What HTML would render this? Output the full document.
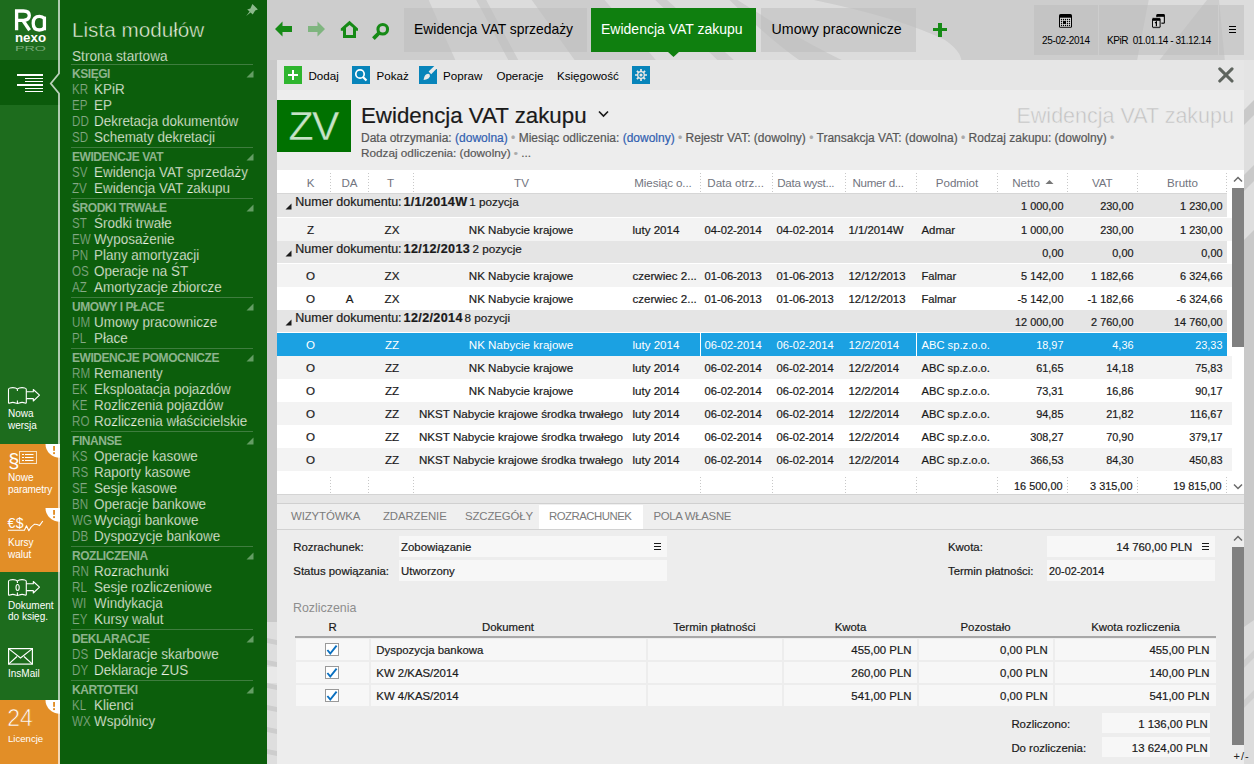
<!DOCTYPE html><html><head><meta charset="utf-8"><style>
html,body{margin:0;padding:0;width:1254px;height:764px;overflow:hidden;background:#cbcbcb}
body{position:relative;font-family:"Liberation Sans",sans-serif}
body>div,body>span,body>svg{position:absolute;display:block}
body>span{white-space:nowrap}
.d{-webkit-text-stroke:0.2px currentColor}
</style></head><body>
<div style="left:0px;top:0px;width:60px;height:764px;background:#1d6c1d;"></div>
<div style="left:0px;top:60px;width:60px;height:45px;background:#0b5a0b;"></div>
<div style="left:0px;top:444px;width:60px;height:128px;background:#e28e27;"></div>
<div style="left:0px;top:700px;width:60px;height:64px;background:#e28e27;"></div>
<svg style="left:0;top:0" width="58" height="58">
<g fill="none" stroke="#fff" stroke-width="3.3">
<path d="M16.6 30.3 V11 H23.5 Q29.3 11 29.3 15.6 Q29.3 20.3 23.5 20.3 H16.6"/>
<path d="M22.8 20.3 L29.6 30.3"/>
<path d="M44.4 16.6 V30.3"/>
<path d="M44.4 18.5 Q42.5 16.3 39.5 16.3 Q33.2 16.3 33.2 23.3 Q33.2 30 39.2 30 Q42.5 30 44.4 27.8"/>
</g>
<text x="15" y="41.6" font-family="Liberation Sans" font-weight="700" font-size="13" fill="#fff" textLength="31" lengthAdjust="spacingAndGlyphs">nexo</text>
<text x="15" y="51" font-family="Liberation Sans" font-size="7" fill="#7aab7a" textLength="31" lengthAdjust="spacingAndGlyphs">PRO</text>
</svg>
<div style="left:17px;top:74px;width:26px;height:2px;background:#ffffff;"></div>
<div style="left:25px;top:78px;width:18px;height:1px;background:#ffffff;"></div>
<div style="left:25px;top:81px;width:18px;height:1px;background:#ffffff;"></div>
<div style="left:17px;top:84px;width:26px;height:2px;background:#ffffff;"></div>
<div style="left:25px;top:88px;width:18px;height:1px;background:#ffffff;"></div>
<div style="left:25px;top:91px;width:18px;height:1px;background:#ffffff;"></div>
<div style="left:60px;top:0px;width:207px;height:764px;background:#0c5e0c;"></div>
<svg style="left:0;top:0" width="62" height="764"><path d="M60 73.5 L50.5 83.5 L60 93.5Z" fill="#0c5e0c"/><path d="M59 0 V73.5 L50.8 83.5 L59 93.5 V764" stroke="rgba(255,255,255,0.72)" stroke-width="1.8" fill="none"/></svg>
<svg style="left:0;top:380px" width="58" height="64" fill="none" stroke="#fff" stroke-width="1.1" stroke-linejoin="round">
<path d="M8.5 22.8 V9.6 Q8.5 8.2 10 8 Q12.8 7.2 15.5 8 Q17 8.5 17.4 9.3 Q17.8 8.5 19.3 8 Q22 7.2 24.8 8 Q26.3 8.2 26.3 9.6 V22.8 Q26.3 23.4 25 22.9 Q22 21.9 19.3 22.9 Q17.8 23.5 17.4 23.3 Q17 23.5 15.5 22.9 Q12.8 21.9 10 22.9 Q8.5 23.4 8.5 22.8 Z"/>
<path d="M17.4 9.3 V11 M17.4 20.5 V23.3"/>
<path d="M26.3 11.8 H33.3 V9.5 L39.5 15.2 L33.3 21 V18.6 H26.3"/>
</svg>
<span style="left:8px;top:408px;font-size:10px;line-height:12.5px;color:#ffffff;">Nowa</span>
<span style="left:8px;top:420px;font-size:10px;line-height:12.5px;color:#ffffff;">wersja</span>
<svg style="left:45px;top:444px" width="15" height="15"><path d="M0.5 0 A14.5 13.8 0 0 0 15 13.8 V0 Z" fill="#fff"/><rect x="8.1" y="2" width="1.9" height="4.8" fill="#e28e27"/><rect x="8.1" y="8.2" width="1.9" height="1.9" fill="#e28e27"/></svg>
<svg style="left:45px;top:508px" width="15" height="15"><path d="M0.5 0 A14.5 13.8 0 0 0 15 13.8 V0 Z" fill="#fff"/><rect x="8.1" y="2" width="1.9" height="4.8" fill="#e28e27"/><rect x="8.1" y="8.2" width="1.9" height="1.9" fill="#e28e27"/></svg>
<svg style="left:45px;top:700px" width="15" height="15"><path d="M0.5 0 A14.5 13.8 0 0 0 15 13.8 V0 Z" fill="#fff"/><rect x="8.1" y="2" width="1.9" height="4.8" fill="#e28e27"/><rect x="8.1" y="8.2" width="1.9" height="1.9" fill="#e28e27"/></svg>
<svg style="left:0;top:444px" width="58" height="64" fill="none" stroke="#f7e2c4" stroke-width="1">
<rect x="19.5" y="7.5" width="17" height="12"/>
<path d="M22 10.5 H24 M25 10.5 H33.5 M22 13.5 H24 M25 13.5 H33.5 M22 16.5 H24 M25 16.5 H33.5" stroke="#fff"/>
</svg>
<span style="left:7.6px;top:448px;font-size:21px;line-height:26.25px;color:#ffffff;transform:scaleX(0.95);">§</span>
<span style="left:8px;top:472px;font-size:10px;line-height:12.5px;color:#ffffff;">Nowe</span>
<span style="left:8px;top:484px;font-size:10px;line-height:12.5px;color:#ffffff;letter-spacing:-0.1px;">parametry</span>
<svg style="left:0;top:508px" width="58" height="64" fill="none" stroke="#fff" stroke-width="1.1" stroke-linejoin="round">
<path d="M8 22.3 H24.4 L26.5 17.8 L28.8 22.8 Q31 18.3 34.2 16.4 Q36 15.9 39.5 17.6 L42.8 13"/>
</svg>
<span style="left:7.6px;top:515px;font-size:14px;line-height:17.5px;color:#ffffff;letter-spacing:0.4px;">€$</span>
<span style="left:8px;top:537px;font-size:10px;line-height:12.5px;color:#ffffff;">Kursy</span>
<span style="left:8px;top:549px;font-size:10px;line-height:12.5px;color:#ffffff;">walut</span>
<svg style="left:0;top:572px" width="58" height="64" fill="none" stroke="#fff" stroke-width="1.1" stroke-linejoin="round">
<path d="M8.5 22.8 V9.6 Q8.5 8.2 10 8 Q12.8 7.2 15.5 8 Q17 8.5 17.4 9.3 Q17.8 8.5 19.3 8 Q22 7.2 24.8 8 Q26.3 8.2 26.3 9.6 V22.8 Q26.3 23.4 25 22.9 Q22 21.9 19.3 22.9 Q17.8 23.5 17.4 23.3 Q17 23.5 15.5 22.9 Q12.8 21.9 10 22.9 Q8.5 23.4 8.5 22.8 Z"/>
<path d="M17.4 9.3 V11 M17.4 20.5 V23.3"/>
<path d="M26.3 11.8 H33.3 V9.5 L39.5 15.2 L33.3 21 V18.6 H26.3"/>
<ellipse cx="17.6" cy="15.5" rx="1.6" ry="3"/>
</svg>
<span style="left:8px;top:600px;font-size:10px;line-height:12.5px;color:#ffffff;">Dokument</span>
<span style="left:8px;top:611px;font-size:10px;line-height:12.5px;color:#ffffff;">do księg.</span>
<svg style="left:0;top:636px" width="58" height="64" fill="none" stroke="#fff" stroke-width="1.2">
<rect x="8.6" y="12.6" width="23.8" height="15.5"/>
<path d="M8.6 12.6 L20.5 22 L32.4 12.6 M8.6 28.1 L17 20.5 M32.4 28.1 L24 20.5"/>
</svg>
<span style="left:8px;top:668px;font-size:10px;line-height:12.5px;color:#ffffff;">InsMail</span>
<span style="left:7.3px;top:704px;font-size:23px;line-height:28.75px;color:#ffffff;-webkit-text-stroke:0.6px #e28e27;">24</span>
<span style="left:8px;top:733px;font-size:9.6px;line-height:12.0px;color:#ffffff;">Licencje</span>
<svg style="left:244px;top:3px" width="16" height="16"><polygon points="8.4,1 13.9,6.5 11.2,7.4 8.7,11.4 6.6,9.4 2.2,12.9 5.6,8.4 3.2,6.5 6.4,5.4" fill="#8cba8c"/></svg>
<span style="left:72px;top:17px;font-size:20.7px;line-height:25.88px;color:#e9f0df;-webkit-text-stroke:0.45px #0c5e0c;">Lista modułów</span>
<span style="left:71.5px;top:48px;font-size:14px;line-height:17.5px;color:#eef3e4;transform:scaleX(0.975);transform-origin:0 0;-webkit-text-stroke:0.25px #0c5e0c;">Strona startowa</span>
<div style="left:71px;top:64px;width:182px;height:1px;background:#3f7d3f;"></div>
<span style="left:72px;top:67px;font-size:12px;line-height:15.0px;color:#8db38d;font-weight:700;letter-spacing:-0.45px;">KSIĘGI</span>
<svg style="left:246px;top:70.1px" width="8" height="8"><path d="M7.5 0.5 V7.5 H0.5Z" fill="#649d64"/></svg>
<span style="left:71.5px;top:81px;font-size:14px;line-height:17.5px;color:#86a986;transform:scaleX(0.83);transform-origin:0 0;-webkit-text-stroke:0.2px #0c5e0c;">KR</span>
<span style="left:93.5px;top:81px;font-size:14px;line-height:17.5px;color:#eef3e4;transform:scaleX(0.96);transform-origin:0 0;-webkit-text-stroke:0.25px #0c5e0c;">KPiR</span>
<span style="left:71.5px;top:97px;font-size:14px;line-height:17.5px;color:#86a986;transform:scaleX(0.83);transform-origin:0 0;-webkit-text-stroke:0.2px #0c5e0c;">EP</span>
<span style="left:93.5px;top:97px;font-size:14px;line-height:17.5px;color:#eef3e4;transform:scaleX(0.96);transform-origin:0 0;-webkit-text-stroke:0.25px #0c5e0c;">EP</span>
<span style="left:71.5px;top:113px;font-size:14px;line-height:17.5px;color:#86a986;transform:scaleX(0.83);transform-origin:0 0;-webkit-text-stroke:0.2px #0c5e0c;">DD</span>
<span style="left:93.5px;top:113px;font-size:14px;line-height:17.5px;color:#eef3e4;transform:scaleX(0.96);transform-origin:0 0;-webkit-text-stroke:0.25px #0c5e0c;">Dekretacja dokumentów</span>
<span style="left:71.5px;top:129px;font-size:14px;line-height:17.5px;color:#86a986;transform:scaleX(0.83);transform-origin:0 0;-webkit-text-stroke:0.2px #0c5e0c;">SD</span>
<span style="left:93.5px;top:129px;font-size:14px;line-height:17.5px;color:#eef3e4;transform:scaleX(0.96);transform-origin:0 0;-webkit-text-stroke:0.25px #0c5e0c;">Schematy dekretacji</span>
<div style="left:71px;top:147px;width:182px;height:1px;background:#3f7d3f;"></div>
<span style="left:72px;top:150px;font-size:12px;line-height:15.0px;color:#8db38d;font-weight:700;letter-spacing:-0.45px;">EWIDENCJE VAT</span>
<svg style="left:246px;top:153.2px" width="8" height="8"><path d="M7.5 0.5 V7.5 H0.5Z" fill="#649d64"/></svg>
<span style="left:71.5px;top:164px;font-size:14px;line-height:17.5px;color:#86a986;transform:scaleX(0.83);transform-origin:0 0;-webkit-text-stroke:0.2px #0c5e0c;">SV</span>
<span style="left:93.5px;top:164px;font-size:14px;line-height:17.5px;color:#eef3e4;transform:scaleX(0.96);transform-origin:0 0;-webkit-text-stroke:0.25px #0c5e0c;">Ewidencja VAT sprzedaży</span>
<span style="left:71.5px;top:180px;font-size:14px;line-height:17.5px;color:#86a986;transform:scaleX(0.83);transform-origin:0 0;-webkit-text-stroke:0.2px #0c5e0c;">ZV</span>
<span style="left:93.5px;top:180px;font-size:14px;line-height:17.5px;color:#eef3e4;transform:scaleX(0.96);transform-origin:0 0;-webkit-text-stroke:0.25px #0c5e0c;">Ewidencja VAT zakupu</span>
<div style="left:71px;top:198px;width:182px;height:1px;background:#3f7d3f;"></div>
<span style="left:72px;top:201px;font-size:12px;line-height:15.0px;color:#8db38d;font-weight:700;letter-spacing:-0.45px;">ŚRODKI TRWAŁE</span>
<svg style="left:246px;top:204.14999999999998px" width="8" height="8"><path d="M7.5 0.5 V7.5 H0.5Z" fill="#649d64"/></svg>
<span style="left:71.5px;top:215px;font-size:14px;line-height:17.5px;color:#86a986;transform:scaleX(0.83);transform-origin:0 0;-webkit-text-stroke:0.2px #0c5e0c;">ST</span>
<span style="left:93.5px;top:215px;font-size:14px;line-height:17.5px;color:#eef3e4;transform:scaleX(0.96);transform-origin:0 0;-webkit-text-stroke:0.25px #0c5e0c;">Środki trwałe</span>
<span style="left:71.5px;top:231px;font-size:14px;line-height:17.5px;color:#86a986;transform:scaleX(0.83);transform-origin:0 0;-webkit-text-stroke:0.2px #0c5e0c;">EW</span>
<span style="left:93.5px;top:231px;font-size:14px;line-height:17.5px;color:#eef3e4;transform:scaleX(0.96);transform-origin:0 0;-webkit-text-stroke:0.25px #0c5e0c;">Wyposażenie</span>
<span style="left:71.5px;top:247px;font-size:14px;line-height:17.5px;color:#86a986;transform:scaleX(0.83);transform-origin:0 0;-webkit-text-stroke:0.2px #0c5e0c;">PN</span>
<span style="left:93.5px;top:247px;font-size:14px;line-height:17.5px;color:#eef3e4;transform:scaleX(0.96);transform-origin:0 0;-webkit-text-stroke:0.25px #0c5e0c;">Plany amortyzacji</span>
<span style="left:71.5px;top:263px;font-size:14px;line-height:17.5px;color:#86a986;transform:scaleX(0.83);transform-origin:0 0;-webkit-text-stroke:0.2px #0c5e0c;">OS</span>
<span style="left:93.5px;top:263px;font-size:14px;line-height:17.5px;color:#eef3e4;transform:scaleX(0.96);transform-origin:0 0;-webkit-text-stroke:0.25px #0c5e0c;">Operacje na ŚT</span>
<span style="left:71.5px;top:279px;font-size:14px;line-height:17.5px;color:#86a986;transform:scaleX(0.83);transform-origin:0 0;-webkit-text-stroke:0.2px #0c5e0c;">AZ</span>
<span style="left:93.5px;top:279px;font-size:14px;line-height:17.5px;color:#eef3e4;transform:scaleX(0.96);transform-origin:0 0;-webkit-text-stroke:0.25px #0c5e0c;">Amortyzacje zbiorcze</span>
<div style="left:71px;top:297px;width:182px;height:1px;background:#3f7d3f;"></div>
<span style="left:72px;top:300px;font-size:12px;line-height:15.0px;color:#8db38d;font-weight:700;letter-spacing:-0.45px;">UMOWY I PŁACE</span>
<svg style="left:246px;top:303.09999999999997px" width="8" height="8"><path d="M7.5 0.5 V7.5 H0.5Z" fill="#649d64"/></svg>
<span style="left:71.5px;top:314px;font-size:14px;line-height:17.5px;color:#86a986;transform:scaleX(0.83);transform-origin:0 0;-webkit-text-stroke:0.2px #0c5e0c;">UM</span>
<span style="left:93.5px;top:314px;font-size:14px;line-height:17.5px;color:#eef3e4;transform:scaleX(0.96);transform-origin:0 0;-webkit-text-stroke:0.25px #0c5e0c;">Umowy pracownicze</span>
<span style="left:71.5px;top:330px;font-size:14px;line-height:17.5px;color:#86a986;transform:scaleX(0.83);transform-origin:0 0;-webkit-text-stroke:0.2px #0c5e0c;">PL</span>
<span style="left:93.5px;top:330px;font-size:14px;line-height:17.5px;color:#eef3e4;transform:scaleX(0.96);transform-origin:0 0;-webkit-text-stroke:0.25px #0c5e0c;">Płace</span>
<div style="left:71px;top:348px;width:182px;height:1px;background:#3f7d3f;"></div>
<span style="left:72px;top:351px;font-size:12px;line-height:15.0px;color:#8db38d;font-weight:700;letter-spacing:-0.45px;">EWIDENCJE POMOCNICZE</span>
<svg style="left:246px;top:354.04999999999995px" width="8" height="8"><path d="M7.5 0.5 V7.5 H0.5Z" fill="#649d64"/></svg>
<span style="left:71.5px;top:365px;font-size:14px;line-height:17.5px;color:#86a986;transform:scaleX(0.83);transform-origin:0 0;-webkit-text-stroke:0.2px #0c5e0c;">RM</span>
<span style="left:93.5px;top:365px;font-size:14px;line-height:17.5px;color:#eef3e4;transform:scaleX(0.96);transform-origin:0 0;-webkit-text-stroke:0.25px #0c5e0c;">Remanenty</span>
<span style="left:71.5px;top:381px;font-size:14px;line-height:17.5px;color:#86a986;transform:scaleX(0.83);transform-origin:0 0;-webkit-text-stroke:0.2px #0c5e0c;">EK</span>
<span style="left:93.5px;top:381px;font-size:14px;line-height:17.5px;color:#eef3e4;transform:scaleX(0.96);transform-origin:0 0;-webkit-text-stroke:0.25px #0c5e0c;">Eksploatacja pojazdów</span>
<span style="left:71.5px;top:397px;font-size:14px;line-height:17.5px;color:#86a986;transform:scaleX(0.83);transform-origin:0 0;-webkit-text-stroke:0.2px #0c5e0c;">KE</span>
<span style="left:93.5px;top:397px;font-size:14px;line-height:17.5px;color:#eef3e4;transform:scaleX(0.96);transform-origin:0 0;-webkit-text-stroke:0.25px #0c5e0c;">Rozliczenia pojazdów</span>
<span style="left:71.5px;top:413px;font-size:14px;line-height:17.5px;color:#86a986;transform:scaleX(0.83);transform-origin:0 0;-webkit-text-stroke:0.2px #0c5e0c;">RO</span>
<span style="left:93.5px;top:413px;font-size:14px;line-height:17.5px;color:#eef3e4;transform:scaleX(0.96);transform-origin:0 0;-webkit-text-stroke:0.25px #0c5e0c;">Rozliczenia właścicielskie</span>
<div style="left:71px;top:431px;width:182px;height:1px;background:#3f7d3f;"></div>
<span style="left:72px;top:434px;font-size:12px;line-height:15.0px;color:#8db38d;font-weight:700;letter-spacing:-0.45px;">FINANSE</span>
<svg style="left:246px;top:436.99999999999994px" width="8" height="8"><path d="M7.5 0.5 V7.5 H0.5Z" fill="#649d64"/></svg>
<span style="left:71.5px;top:448px;font-size:14px;line-height:17.5px;color:#86a986;transform:scaleX(0.83);transform-origin:0 0;-webkit-text-stroke:0.2px #0c5e0c;">KS</span>
<span style="left:93.5px;top:448px;font-size:14px;line-height:17.5px;color:#eef3e4;transform:scaleX(0.96);transform-origin:0 0;-webkit-text-stroke:0.25px #0c5e0c;">Operacje kasowe</span>
<span style="left:71.5px;top:464px;font-size:14px;line-height:17.5px;color:#86a986;transform:scaleX(0.83);transform-origin:0 0;-webkit-text-stroke:0.2px #0c5e0c;">RS</span>
<span style="left:93.5px;top:464px;font-size:14px;line-height:17.5px;color:#eef3e4;transform:scaleX(0.96);transform-origin:0 0;-webkit-text-stroke:0.25px #0c5e0c;">Raporty kasowe</span>
<span style="left:71.5px;top:480px;font-size:14px;line-height:17.5px;color:#86a986;transform:scaleX(0.83);transform-origin:0 0;-webkit-text-stroke:0.2px #0c5e0c;">SE</span>
<span style="left:93.5px;top:480px;font-size:14px;line-height:17.5px;color:#eef3e4;transform:scaleX(0.96);transform-origin:0 0;-webkit-text-stroke:0.25px #0c5e0c;">Sesje kasowe</span>
<span style="left:71.5px;top:496px;font-size:14px;line-height:17.5px;color:#86a986;transform:scaleX(0.83);transform-origin:0 0;-webkit-text-stroke:0.2px #0c5e0c;">BN</span>
<span style="left:93.5px;top:496px;font-size:14px;line-height:17.5px;color:#eef3e4;transform:scaleX(0.96);transform-origin:0 0;-webkit-text-stroke:0.25px #0c5e0c;">Operacje bankowe</span>
<span style="left:71.5px;top:512px;font-size:14px;line-height:17.5px;color:#86a986;transform:scaleX(0.83);transform-origin:0 0;-webkit-text-stroke:0.2px #0c5e0c;">WG</span>
<span style="left:93.5px;top:512px;font-size:14px;line-height:17.5px;color:#eef3e4;transform:scaleX(0.96);transform-origin:0 0;-webkit-text-stroke:0.25px #0c5e0c;">Wyciągi bankowe</span>
<span style="left:71.5px;top:528px;font-size:14px;line-height:17.5px;color:#86a986;transform:scaleX(0.83);transform-origin:0 0;-webkit-text-stroke:0.2px #0c5e0c;">DB</span>
<span style="left:93.5px;top:528px;font-size:14px;line-height:17.5px;color:#eef3e4;transform:scaleX(0.96);transform-origin:0 0;-webkit-text-stroke:0.25px #0c5e0c;">Dyspozycje bankowe</span>
<div style="left:71px;top:546px;width:182px;height:1px;background:#3f7d3f;"></div>
<span style="left:72px;top:549px;font-size:12px;line-height:15.0px;color:#8db38d;font-weight:700;letter-spacing:-0.45px;">ROZLICZENIA</span>
<svg style="left:246px;top:551.95px" width="8" height="8"><path d="M7.5 0.5 V7.5 H0.5Z" fill="#649d64"/></svg>
<span style="left:71.5px;top:563px;font-size:14px;line-height:17.5px;color:#86a986;transform:scaleX(0.83);transform-origin:0 0;-webkit-text-stroke:0.2px #0c5e0c;">RN</span>
<span style="left:93.5px;top:563px;font-size:14px;line-height:17.5px;color:#eef3e4;transform:scaleX(0.96);transform-origin:0 0;-webkit-text-stroke:0.25px #0c5e0c;">Rozrachunki</span>
<span style="left:71.5px;top:579px;font-size:14px;line-height:17.5px;color:#86a986;transform:scaleX(0.83);transform-origin:0 0;-webkit-text-stroke:0.2px #0c5e0c;">RL</span>
<span style="left:93.5px;top:579px;font-size:14px;line-height:17.5px;color:#eef3e4;transform:scaleX(0.96);transform-origin:0 0;-webkit-text-stroke:0.25px #0c5e0c;">Sesje rozliczeniowe</span>
<span style="left:71.5px;top:595px;font-size:14px;line-height:17.5px;color:#86a986;transform:scaleX(0.83);transform-origin:0 0;-webkit-text-stroke:0.2px #0c5e0c;">WI</span>
<span style="left:93.5px;top:595px;font-size:14px;line-height:17.5px;color:#eef3e4;transform:scaleX(0.96);transform-origin:0 0;-webkit-text-stroke:0.25px #0c5e0c;">Windykacja</span>
<span style="left:71.5px;top:611px;font-size:14px;line-height:17.5px;color:#86a986;transform:scaleX(0.83);transform-origin:0 0;-webkit-text-stroke:0.2px #0c5e0c;">EY</span>
<span style="left:93.5px;top:611px;font-size:14px;line-height:17.5px;color:#eef3e4;transform:scaleX(0.96);transform-origin:0 0;-webkit-text-stroke:0.25px #0c5e0c;">Kursy walut</span>
<div style="left:71px;top:629px;width:182px;height:1px;background:#3f7d3f;"></div>
<span style="left:72px;top:632px;font-size:12px;line-height:15.0px;color:#8db38d;font-weight:700;letter-spacing:-0.45px;">DEKLARACJE</span>
<svg style="left:246px;top:634.9000000000001px" width="8" height="8"><path d="M7.5 0.5 V7.5 H0.5Z" fill="#649d64"/></svg>
<span style="left:71.5px;top:646px;font-size:14px;line-height:17.5px;color:#86a986;transform:scaleX(0.83);transform-origin:0 0;-webkit-text-stroke:0.2px #0c5e0c;">DS</span>
<span style="left:93.5px;top:646px;font-size:14px;line-height:17.5px;color:#eef3e4;transform:scaleX(0.96);transform-origin:0 0;-webkit-text-stroke:0.25px #0c5e0c;">Deklaracje skarbowe</span>
<span style="left:71.5px;top:662px;font-size:14px;line-height:17.5px;color:#86a986;transform:scaleX(0.83);transform-origin:0 0;-webkit-text-stroke:0.2px #0c5e0c;">DY</span>
<span style="left:93.5px;top:662px;font-size:14px;line-height:17.5px;color:#eef3e4;transform:scaleX(0.96);transform-origin:0 0;-webkit-text-stroke:0.25px #0c5e0c;">Deklaracje ZUS</span>
<div style="left:71px;top:680px;width:182px;height:1px;background:#3f7d3f;"></div>
<span style="left:72px;top:683px;font-size:12px;line-height:15.0px;color:#8db38d;font-weight:700;letter-spacing:-0.45px;">KARTOTEKI</span>
<svg style="left:246px;top:685.8500000000001px" width="8" height="8"><path d="M7.5 0.5 V7.5 H0.5Z" fill="#649d64"/></svg>
<span style="left:71.5px;top:697px;font-size:14px;line-height:17.5px;color:#86a986;transform:scaleX(0.83);transform-origin:0 0;-webkit-text-stroke:0.2px #0c5e0c;">KL</span>
<span style="left:93.5px;top:697px;font-size:14px;line-height:17.5px;color:#eef3e4;transform:scaleX(0.96);transform-origin:0 0;-webkit-text-stroke:0.25px #0c5e0c;">Klienci</span>
<span style="left:71.5px;top:713px;font-size:14px;line-height:17.5px;color:#86a986;transform:scaleX(0.83);transform-origin:0 0;-webkit-text-stroke:0.2px #0c5e0c;">WX</span>
<span style="left:93.5px;top:713px;font-size:14px;line-height:17.5px;color:#eef3e4;transform:scaleX(0.96);transform-origin:0 0;-webkit-text-stroke:0.25px #0c5e0c;">Wspólnicy</span>
<div style="left:267px;top:0px;width:987px;height:764px;background:#cbcbcb;"></div>
<svg style="left:267px;top:0" width="987" height="764"><rect x="0" y="0" width="987" height="62" fill="#dcdcdc"/><g fill="#cdcdcd"><polygon points="0.0,0 161.7,0 189.2,62 0.0,62"/><polygon points="209.2,0 219.2,0 252.3,62 242.3,62"/><polygon points="264.8,0 337.6,0 390.5,62 309.0,62"/><polygon points="388.3,0 400.0,0 469.0,62 452.5,62"/><path d="M462.5 0 H470.5 Q533 40 579 62 H535 Q503 40 462.5 0Z"/><path d="M546.8 0 Q633 18 678 40 Q695 52 694.3 62 H869.8 L881.7 0Z"/><polygon points="940.0,0 952.0,0 958.0,62 891.0,62"/></g></svg>
<svg style="left:267px;top:60px" width="10" height="704"><rect width="10" height="704" fill="#c9c9c9"/>
<rect y="562" width="10" height="142" fill="#dedede"/><rect y="607" width="10" height="16" fill="#e9e9e9"/>
<g fill="#cdcdcd"><polygon points="0,578 10,580 10,585 0,583"/><polygon points="0,600 10,602 10,607 0,605"/><polygon points="0,623 10,625 10,630 0,628"/><polygon points="0,645 10,647 10,652 0,650"/><polygon points="0,667 10,669 10,674 0,672"/><polygon points="0,689 10,691 10,696 0,694"/></g></svg>
<svg style="left:1244px;top:60px" width="10" height="704"><rect width="10" height="704" fill="#c9c9c9"/>
<polygon points="0,0 10,0 10,40 0,50" fill="#e4e4e4"/><polygon points="0,65 10,55 10,105 0,115" fill="#dedede"/><polygon points="0,131 10,121 10,170 0,180" fill="#dedede"/>
<polygon points="0,567 10,560 10,704 0,704" fill="#dcdcdc"/><polygon points="0,600 10,590 10,598 0,608" fill="#cfcfcf"/><polygon points="0,640 10,630 10,638 0,648" fill="#cfcfcf"/></svg>
<svg style="left:272px;top:18px" width="125" height="24">
<path d="M3 11 L10.5 3.5 V8 H20 V14 H10.5 V18.5Z" fill="#168a16"/>
<path d="M53 11 L45.5 3.5 V8 H36 V14 H45.5 V18.5Z" fill="#7fb57f"/>
<path d="M77.5 2.8 L86 10.4 V12.8 H84 V20 H71 V12.8 H68.8 V10.4 Z" fill="#168a16"/>
<path d="M77.6 6.9 L81 9.8 V16.9 H74 V9.8 Z" fill="#cdcdcd"/>
<circle cx="110.75" cy="11.25" r="4.8" fill="none" stroke="#168a16" stroke-width="3.1"/>
<path d="M107 15 L101.4 20.6" stroke="#168a16" stroke-width="3.8"/>
</svg>
<div style="left:404px;top:8px;width:183px;height:44px;background:rgba(190,190,190,0.55);"></div>
<span style="left:414px;top:21px;font-size:13.9px;line-height:17.38px;color:#000;">Ewidencja VAT sprzedaży</span>
<div style="left:591px;top:8px;width:165px;height:44px;background:#0f7f0f;"></div>
<svg style="left:667px;top:51px" width="14" height="7"><path d="M0 0 H13 L6.5 6Z" fill="#0f7f0f"/></svg>
<span style="left:601px;top:21px;font-size:14px;line-height:17.5px;color:#ffffff;">Ewidencja VAT zakupu</span>
<div style="left:761px;top:8px;width:155px;height:44px;background:rgba(190,190,190,0.55);"></div>
<span style="left:771.6px;top:21px;font-size:14.2px;line-height:17.75px;color:#000;">Umowy pracownicze</span>
<div style="left:933px;top:28px;width:14px;height:3.4px;background:#168a16;"></div>
<div style="left:938.3px;top:23px;width:3.4px;height:14px;background:#168a16;"></div>
<div style="left:1034px;top:5px;width:64px;height:50px;background:rgba(190,190,190,0.55);"></div>
<div style="left:1099px;top:5px;width:119px;height:50px;background:rgba(190,190,190,0.55);"></div>
<div style="left:1219px;top:5px;width:25px;height:50px;background:rgba(190,190,190,0.55);"></div>
<svg style="left:1059px;top:14px" width="14" height="15">
<rect x="0" y="0" width="13" height="13.8" rx="1.6" fill="#000"/>
<rect x="1" y="3.7" width="11" height="9.1" fill="#d6d6d6"/>
<g fill="#000"><circle cx="2.5" cy="5.5" r="0.65"/><circle cx="2.5" cy="7.5" r="0.65"/><circle cx="2.5" cy="9.5" r="0.65"/><circle cx="2.5" cy="11.5" r="0.65"/><circle cx="4.5" cy="5.5" r="0.65"/><circle cx="4.5" cy="7.5" r="0.65"/><circle cx="4.5" cy="9.5" r="0.65"/><circle cx="4.5" cy="11.5" r="0.65"/><circle cx="6.5" cy="5.5" r="0.65"/><circle cx="6.5" cy="7.5" r="0.65"/><circle cx="6.5" cy="9.5" r="0.65"/><circle cx="6.5" cy="11.5" r="0.65"/><circle cx="8.5" cy="5.5" r="0.65"/><circle cx="8.5" cy="7.5" r="0.65"/><circle cx="8.5" cy="9.5" r="0.65"/><circle cx="8.5" cy="11.5" r="0.65"/><circle cx="10.5" cy="5.5" r="0.65"/><circle cx="10.5" cy="7.5" r="0.65"/><circle cx="10.5" cy="9.5" r="0.65"/><circle cx="10.5" cy="11.5" r="0.65"/></g>
<rect x="4" y="6.9" width="3" height="3" fill="#000"/>
</svg>
<span style="left:1042px;top:35px;font-size:10px;line-height:12.5px;color:#000;letter-spacing:-0.35px">25-02-2014</span>
<svg style="left:1152px;top:14px" width="14" height="15">
<rect x="4.3" y="0" width="8.6" height="9.7" rx="1.3" fill="#000"/>
<rect x="5.4" y="2.8" width="6.4" height="5.8" fill="#d6d6d6"/>
<rect x="-0.4" y="3.6" width="9.4" height="10.6" rx="1.6" fill="#000" stroke="#d0d0d0" stroke-width="0.8"/>
<rect x="1" y="6.8" width="6.6" height="6" fill="#d6d6d6"/>
<path d="M3 9 L4.4 8 V12.2" stroke="#000" stroke-width="1.2" fill="none"/>
</svg>
<span style="left:1107px;top:35px;font-size:10px;line-height:12.5px;color:#000;letter-spacing:-0.45px">KPiR&nbsp; 01.01.14 - 31.12.14</span>
<div style="left:1229px;top:26px;width:6.5px;height:1.3px;background:#000;"></div>
<div style="left:1229px;top:29px;width:6.5px;height:1.3px;background:#000;"></div>
<div style="left:1229px;top:32px;width:6.5px;height:1.3px;background:#000;"></div>
<div style="left:277px;top:60px;width:967px;height:30px;background:#e6e6e6;"></div>
<div style="left:284px;top:66px;width:18px;height:18px;background:#2eb52e;"></div>
<div style="left:288px;top:74px;width:10px;height:2px;background:#fff;"></div>
<div style="left:292px;top:70px;width:2px;height:10px;background:#fff;"></div>
<span style="left:308.5px;top:69px;font-size:11.6px;line-height:14.5px;color:#000;">Dodaj</span>
<div style="left:352px;top:66px;width:18px;height:18px;background:#0784ba;"></div>
<svg style="left:352px;top:66px" width="18" height="18"><circle cx="8" cy="8" r="4.2" fill="none" stroke="#fff" stroke-width="1.7"/><path d="M11 11 L14.5 14.5" stroke="#fff" stroke-width="2.2"/></svg>
<span style="left:376.5px;top:69px;font-size:11.6px;line-height:14.5px;color:#000;">Pokaż</span>
<div style="left:419px;top:66px;width:18px;height:18px;background:#0784ba;"></div>
<svg style="left:419px;top:66px" width="18" height="18"><path d="M15.3 0 H18 V2.3 L12.2 8.2 L9.6 5.6Z" fill="#e9e9e9"/><path d="M4.6 14 Q5.2 9.6 7.4 8.3 Q9.6 7.2 10.8 8.8 Q11.6 10.8 9.4 12.6 Q7.3 13.8 4.6 14Z" fill="#e9e9e9"/></svg>
<span style="left:443px;top:69px;font-size:11.6px;line-height:14.5px;color:#000;">Popraw</span>
<span style="left:496.4px;top:69px;font-size:11.6px;line-height:14.5px;color:#000;">Operacje</span>
<span style="left:557px;top:69px;font-size:11.6px;line-height:14.5px;color:#000;">Księgowość</span>
<div style="left:632px;top:66px;width:18px;height:18px;background:#0784ba;"></div>
<svg style="left:632px;top:66px" width="18" height="18"><g stroke="#ece8e4" stroke-width="1.7"><path d="M9 3 V15 M3 9 H15 M4.9 4.9 L13.1 13.1 M13.1 4.9 L4.9 13.1"/></g><circle cx="9" cy="9" r="3.9" fill="#ece8e4"/><circle cx="9" cy="9" r="2.1" fill="none" stroke="#0784ba" stroke-width="1.1"/></svg>
<svg style="left:1217px;top:66px" width="18" height="17"><path d="M2.8 2.8 L15 15 M15 2.8 L2.8 15" stroke="#5e645e" stroke-width="3.1" stroke-linecap="round"/></svg>
<div style="left:277px;top:90px;width:967px;height:674px;background:#ededed;"></div>
<div style="left:277px;top:100px;width:74px;height:52px;background:#007100;"></div>
<span style="left:288.5px;top:101px;font-size:41px;line-height:51.25px;color:#c6e3c6;letter-spacing:-1.6px;-webkit-text-stroke:0.3px #007100;">ZV</span>
<span class="d" style="left:361px;top:102px;font-size:22.3px;line-height:27.88px;color:#1a1a1a;">Ewidencja VAT zakupu</span>
<svg style="left:597px;top:109px" width="14" height="10"><path d="M2 2.5 L6.5 7 L11 2.5" stroke="#1a1a1a" stroke-width="1.7" fill="none"/></svg>
<span style="right:20px;top:103px;font-size:21.5px;line-height:26.88px;color:#c2c2c2;-webkit-text-stroke:0.5px #ededed;">Ewidencja VAT zakupu</span>
<span class="d" style="left:361px;top:131px;font-size:12px;line-height:15.0px;color:#575757;white-space:nowrap;">Data otrzymania: <span style="color:#3160b0">(dowolna)</span> <span style="color:#aaa">•</span> Miesiąc odliczenia: <span style="color:#3160b0">(dowolny)</span> <span style="color:#aaa">•</span> Rejestr VAT: (dowolny) <span style="color:#aaa">•</span> Transakcja VAT: (dowolna) <span style="color:#aaa">•</span> Rodzaj zakupu: (dowolny) <span style="color:#aaa">•</span></span>
<span class="d" style="left:361px;top:146px;font-size:11.75px;line-height:14.69px;color:#575757;">Rodzaj odliczenia: (dowolny) <span style="color:#aaa">•</span> ...</span>
<div style="left:277px;top:170px;width:967px;height:324px;background:#ffffff;"></div>
<div style="left:330px;top:173px;width:1px;height:20px;background:repeating-linear-gradient(to bottom,#c8c8c8 0 1px,transparent 1px 3px)"></div>
<div style="left:368px;top:173px;width:1px;height:20px;background:repeating-linear-gradient(to bottom,#c8c8c8 0 1px,transparent 1px 3px)"></div>
<div style="left:413px;top:173px;width:1px;height:20px;background:repeating-linear-gradient(to bottom,#c8c8c8 0 1px,transparent 1px 3px)"></div>
<div style="left:700px;top:173px;width:1px;height:20px;background:repeating-linear-gradient(to bottom,#c8c8c8 0 1px,transparent 1px 3px)"></div>
<div style="left:772px;top:173px;width:1px;height:20px;background:repeating-linear-gradient(to bottom,#c8c8c8 0 1px,transparent 1px 3px)"></div>
<div style="left:845px;top:173px;width:1px;height:20px;background:repeating-linear-gradient(to bottom,#c8c8c8 0 1px,transparent 1px 3px)"></div>
<div style="left:916px;top:173px;width:1px;height:20px;background:repeating-linear-gradient(to bottom,#c8c8c8 0 1px,transparent 1px 3px)"></div>
<div style="left:997px;top:173px;width:1px;height:20px;background:repeating-linear-gradient(to bottom,#c8c8c8 0 1px,transparent 1px 3px)"></div>
<div style="left:1067px;top:173px;width:1px;height:20px;background:repeating-linear-gradient(to bottom,#c8c8c8 0 1px,transparent 1px 3px)"></div>
<div style="left:1137px;top:173px;width:1px;height:20px;background:repeating-linear-gradient(to bottom,#c8c8c8 0 1px,transparent 1px 3px)"></div>
<div style="left:1226px;top:173px;width:1px;height:20px;background:repeating-linear-gradient(to bottom,#c8c8c8 0 1px,transparent 1px 3px)"></div>
<div style="left:277px;top:193px;width:950px;height:1px;background:#d6d6d6;"></div>
<span style="left:-189.5px;width:1000px;text-align:center;top:176px;font-size:11.6px;line-height:14.5px;color:#72747e;">K</span>
<span style="left:-150.5px;width:1000px;text-align:center;top:176px;font-size:11.6px;line-height:14.5px;color:#72747e;">DA</span>
<span style="left:-109.5px;width:1000px;text-align:center;top:176px;font-size:11.6px;line-height:14.5px;color:#72747e;">T</span>
<span style="left:21.5px;width:1000px;text-align:center;top:176px;font-size:11.6px;line-height:14.5px;color:#72747e;">TV</span>
<span style="left:634.3px;top:176px;font-size:11.6px;line-height:14.5px;color:#72747e;letter-spacing:-0.1px">Miesiąc o...</span>
<span style="left:707.3px;top:176px;font-size:11.6px;line-height:14.5px;color:#72747e;">Data otrz...</span>
<span style="left:777.3px;top:176px;font-size:11.6px;line-height:14.5px;color:#72747e;letter-spacing:-0.3px">Data wyst...</span>
<span style="left:852.5px;top:176px;font-size:11.6px;line-height:14.5px;color:#72747e;letter-spacing:-0.3px">Numer d...</span>
<span style="left:457px;width:1000px;text-align:center;top:176px;font-size:11.6px;line-height:14.5px;color:#72747e;">Podmiot</span>
<span style="left:526px;width:1000px;text-align:center;top:176px;font-size:11.6px;line-height:14.5px;color:#72747e;">Netto</span>
<svg style="left:1045px;top:179px" width="9" height="6"><path d="M0.5 5 L4.5 1 L8.5 5Z" fill="#777"/></svg>
<span style="left:602.3px;width:1000px;text-align:center;top:176px;font-size:11.6px;line-height:14.5px;color:#72747e;">VAT</span>
<span style="left:682.5px;width:1000px;text-align:center;top:176px;font-size:11.6px;line-height:14.5px;color:#72747e;">Brutto</span>
<div style="left:277px;top:194px;width:950px;height:23px;background:#e5e5e5;"></div>
<svg style="left:285px;top:203px" width="7" height="7"><path d="M6.5 0.5 V6.5 H0.5Z" fill="#1a1a1a"/></svg>
<span class="d" style="left:295.3px;top:195px;font-size:12.5px;line-height:15.62px;color:#1a1a1a;">Numer dokumentu:</span>
<span class="d" style="left:403.4px;top:195px;font-size:12.6px;line-height:15.75px;color:#1a1a1a;font-weight:700;letter-spacing:0.35px">1/1/2014W</span>
<span class="d" style="left:469.3px;top:195px;font-size:11.7px;line-height:14.62px;color:#1a1a1a;">1 pozycja</span>
<span class="d" style="right:190.5px;top:200px;font-size:10.9px;line-height:13.62px;color:#1a1a1a;">1 000,00</span>
<span class="d" style="right:120.5px;top:200px;font-size:10.9px;line-height:13.62px;color:#1a1a1a;">230,00</span>
<span class="d" style="right:31.5px;top:200px;font-size:10.9px;line-height:13.62px;color:#1a1a1a;">1 230,00</span>
<div style="left:277px;top:218px;width:955px;height:23px;background:#f3f3f3;"></div>
<span class="d" style="left:-189.5px;width:1000px;text-align:center;top:223px;font-size:11.6px;line-height:14.5px;color:#1a1a1a;">Z</span>
<span class="d" style="left:-108px;width:1000px;text-align:center;top:223px;font-size:11.6px;line-height:14.5px;color:#1a1a1a;">ZX</span>
<span class="d" style="left:21px;width:1000px;text-align:center;top:223px;font-size:11.6px;line-height:14.5px;color:#1a1a1a;">NK Nabycie krajowe</span>
<span class="d" style="left:632.4px;top:223px;font-size:11.6px;line-height:14.5px;color:#1a1a1a;">luty 2014</span>
<span class="d" style="left:704.5px;top:223px;font-size:11.2px;line-height:14.0px;color:#1a1a1a;">04-02-2014</span>
<span class="d" style="left:776.5px;top:223px;font-size:11.2px;line-height:14.0px;color:#1a1a1a;">04-02-2014</span>
<span class="d" style="left:848.5px;top:223px;font-size:11.4px;line-height:14.25px;color:#1a1a1a;">1/1/2014W</span>
<span class="d" style="left:921.5px;top:223px;font-size:11.4px;line-height:14.25px;color:#1a1a1a;">Admar</span>
<span class="d" style="right:190.5px;top:224px;font-size:10.9px;line-height:13.62px;color:#1a1a1a;">1 000,00</span>
<span class="d" style="right:120.5px;top:224px;font-size:10.9px;line-height:13.62px;color:#1a1a1a;">230,00</span>
<span class="d" style="right:31.5px;top:224px;font-size:10.9px;line-height:13.62px;color:#1a1a1a;">1 230,00</span>
<div style="left:277px;top:241px;width:950px;height:22px;background:#e5e5e5;"></div>
<svg style="left:285px;top:250px" width="7" height="7"><path d="M6.5 0.5 V6.5 H0.5Z" fill="#1a1a1a"/></svg>
<span class="d" style="left:295.3px;top:242px;font-size:12.5px;line-height:15.62px;color:#1a1a1a;">Numer dokumentu:</span>
<span class="d" style="left:403.6px;top:242px;font-size:12.6px;line-height:15.75px;color:#1a1a1a;font-weight:700;letter-spacing:0.35px">12/12/2013</span>
<span class="d" style="left:472.4px;top:242px;font-size:11.7px;line-height:14.62px;color:#1a1a1a;">2 pozycje</span>
<span class="d" style="right:190.5px;top:247px;font-size:10.9px;line-height:13.62px;color:#1a1a1a;">0,00</span>
<span class="d" style="right:120.5px;top:247px;font-size:10.9px;line-height:13.62px;color:#1a1a1a;">0,00</span>
<span class="d" style="right:31.5px;top:247px;font-size:10.9px;line-height:13.62px;color:#1a1a1a;">0,00</span>
<div style="left:277px;top:264px;width:955px;height:23px;background:#f3f3f3;"></div>
<span class="d" style="left:-189.5px;width:1000px;text-align:center;top:269px;font-size:11.6px;line-height:14.5px;color:#1a1a1a;">O</span>
<span class="d" style="left:-108px;width:1000px;text-align:center;top:269px;font-size:11.6px;line-height:14.5px;color:#1a1a1a;">ZX</span>
<span class="d" style="left:21px;width:1000px;text-align:center;top:269px;font-size:11.6px;line-height:14.5px;color:#1a1a1a;">NK Nabycie krajowe</span>
<span class="d" style="left:632.4px;top:269px;font-size:11.6px;line-height:14.5px;color:#1a1a1a;">czerwiec 2...</span>
<span class="d" style="left:704.5px;top:269px;font-size:11.2px;line-height:14.0px;color:#1a1a1a;">01-06-2013</span>
<span class="d" style="left:776.5px;top:269px;font-size:11.2px;line-height:14.0px;color:#1a1a1a;">01-06-2013</span>
<span class="d" style="left:848.5px;top:269px;font-size:11.4px;line-height:14.25px;color:#1a1a1a;">12/12/2013</span>
<span class="d" style="left:921.5px;top:269px;font-size:11.2px;line-height:14.0px;color:#1a1a1a;">Falmar</span>
<span class="d" style="right:190.5px;top:270px;font-size:10.9px;line-height:13.62px;color:#1a1a1a;">5 142,00</span>
<span class="d" style="right:120.5px;top:270px;font-size:10.9px;line-height:13.62px;color:#1a1a1a;">1 182,66</span>
<span class="d" style="right:31.5px;top:270px;font-size:10.9px;line-height:13.62px;color:#1a1a1a;">6 324,66</span>
<div style="left:277px;top:287px;width:955px;height:23px;background:#ffffff;"></div>
<span class="d" style="left:-189.5px;width:1000px;text-align:center;top:292px;font-size:11.6px;line-height:14.5px;color:#1a1a1a;">O</span>
<span class="d" style="left:-150.5px;width:1000px;text-align:center;top:292px;font-size:11.6px;line-height:14.5px;color:#1a1a1a;">A</span>
<span class="d" style="left:-108px;width:1000px;text-align:center;top:292px;font-size:11.6px;line-height:14.5px;color:#1a1a1a;">ZX</span>
<span class="d" style="left:21px;width:1000px;text-align:center;top:292px;font-size:11.6px;line-height:14.5px;color:#1a1a1a;">NK Nabycie krajowe</span>
<span class="d" style="left:632.4px;top:292px;font-size:11.6px;line-height:14.5px;color:#1a1a1a;">czerwiec 2...</span>
<span class="d" style="left:704.5px;top:292px;font-size:11.2px;line-height:14.0px;color:#1a1a1a;">01-06-2013</span>
<span class="d" style="left:776.5px;top:292px;font-size:11.2px;line-height:14.0px;color:#1a1a1a;">01-06-2013</span>
<span class="d" style="left:848.5px;top:292px;font-size:11.4px;line-height:14.25px;color:#1a1a1a;">12/12/2013</span>
<span class="d" style="left:921.5px;top:292px;font-size:11.2px;line-height:14.0px;color:#1a1a1a;">Falmar</span>
<span class="d" style="right:190.5px;top:293px;font-size:10.9px;line-height:13.62px;color:#1a1a1a;">-5 142,00</span>
<span class="d" style="right:120.5px;top:293px;font-size:10.9px;line-height:13.62px;color:#1a1a1a;">-1 182,66</span>
<span class="d" style="right:31.5px;top:293px;font-size:10.9px;line-height:13.62px;color:#1a1a1a;">-6 324,66</span>
<div style="left:277px;top:310px;width:950px;height:22px;background:#e5e5e5;"></div>
<svg style="left:285px;top:319px" width="7" height="7"><path d="M6.5 0.5 V6.5 H0.5Z" fill="#1a1a1a"/></svg>
<span class="d" style="left:295.3px;top:311px;font-size:12.5px;line-height:15.62px;color:#1a1a1a;">Numer dokumentu:</span>
<span class="d" style="left:403.6px;top:311px;font-size:12.6px;line-height:15.75px;color:#1a1a1a;font-weight:700;letter-spacing:0.35px">12/2/2014</span>
<span class="d" style="left:464.6px;top:311px;font-size:11.7px;line-height:14.62px;color:#1a1a1a;">8 pozycji</span>
<span class="d" style="right:190.5px;top:316px;font-size:10.9px;line-height:13.62px;color:#1a1a1a;">12 000,00</span>
<span class="d" style="right:120.5px;top:316px;font-size:10.9px;line-height:13.62px;color:#1a1a1a;">2 760,00</span>
<span class="d" style="right:31.5px;top:316px;font-size:10.9px;line-height:13.62px;color:#1a1a1a;">14 760,00</span>
<div style="left:277px;top:333px;width:950px;height:23px;background:#1ba1e2;"></div>
<div style="left:700px;top:333px;width:1px;height:23px;background:#ffffff;"></div>
<div style="left:916px;top:333px;width:1px;height:23px;background:#ffffff;"></div>
<span style="left:-189.5px;width:1000px;text-align:center;top:338px;font-size:11.6px;line-height:14.5px;color:#ffffff;">O</span>
<span style="left:-108px;width:1000px;text-align:center;top:338px;font-size:11.6px;line-height:14.5px;color:#ffffff;">ZZ</span>
<span style="left:21px;width:1000px;text-align:center;top:338px;font-size:11.6px;line-height:14.5px;color:#ffffff;">NK Nabycie krajowe</span>
<span style="left:632.4px;top:338px;font-size:11.6px;line-height:14.5px;color:#ffffff;">luty 2014</span>
<span style="left:704.5px;top:338px;font-size:11.2px;line-height:14.0px;color:#ffffff;">06-02-2014</span>
<span style="left:776.5px;top:338px;font-size:11.2px;line-height:14.0px;color:#ffffff;">06-02-2014</span>
<span style="left:848.5px;top:338px;font-size:11.4px;line-height:14.25px;color:#ffffff;">12/2/2014</span>
<span style="left:921.5px;top:338px;font-size:11.2px;line-height:14.0px;color:#ffffff;">ABC sp.z.o.o.</span>
<span style="right:190.5px;top:339px;font-size:10.9px;line-height:13.62px;color:#ffffff;">18,97</span>
<span style="right:120.5px;top:339px;font-size:10.9px;line-height:13.62px;color:#ffffff;">4,36</span>
<span style="right:31.5px;top:339px;font-size:10.9px;line-height:13.62px;color:#ffffff;">23,33</span>
<div style="left:277px;top:356px;width:955px;height:23px;background:#f3f3f3;"></div>
<span class="d" style="left:-189.5px;width:1000px;text-align:center;top:361px;font-size:11.6px;line-height:14.5px;color:#1a1a1a;">O</span>
<span class="d" style="left:-108px;width:1000px;text-align:center;top:361px;font-size:11.6px;line-height:14.5px;color:#1a1a1a;">ZZ</span>
<span class="d" style="left:21px;width:1000px;text-align:center;top:361px;font-size:11.6px;line-height:14.5px;color:#1a1a1a;">NK Nabycie krajowe</span>
<span class="d" style="left:632.4px;top:361px;font-size:11.6px;line-height:14.5px;color:#1a1a1a;">luty 2014</span>
<span class="d" style="left:704.5px;top:361px;font-size:11.2px;line-height:14.0px;color:#1a1a1a;">06-02-2014</span>
<span class="d" style="left:776.5px;top:361px;font-size:11.2px;line-height:14.0px;color:#1a1a1a;">06-02-2014</span>
<span class="d" style="left:848.5px;top:361px;font-size:11.4px;line-height:14.25px;color:#1a1a1a;">12/2/2014</span>
<span class="d" style="left:921.5px;top:361px;font-size:11.2px;line-height:14.0px;color:#1a1a1a;">ABC sp.z.o.o.</span>
<span class="d" style="right:190.5px;top:362px;font-size:10.9px;line-height:13.62px;color:#1a1a1a;">61,65</span>
<span class="d" style="right:120.5px;top:362px;font-size:10.9px;line-height:13.62px;color:#1a1a1a;">14,18</span>
<span class="d" style="right:31.5px;top:362px;font-size:10.9px;line-height:13.62px;color:#1a1a1a;">75,83</span>
<div style="left:277px;top:379px;width:955px;height:23px;background:#ffffff;"></div>
<span class="d" style="left:-189.5px;width:1000px;text-align:center;top:384px;font-size:11.6px;line-height:14.5px;color:#1a1a1a;">O</span>
<span class="d" style="left:-108px;width:1000px;text-align:center;top:384px;font-size:11.6px;line-height:14.5px;color:#1a1a1a;">ZZ</span>
<span class="d" style="left:21px;width:1000px;text-align:center;top:384px;font-size:11.6px;line-height:14.5px;color:#1a1a1a;">NK Nabycie krajowe</span>
<span class="d" style="left:632.4px;top:384px;font-size:11.6px;line-height:14.5px;color:#1a1a1a;">luty 2014</span>
<span class="d" style="left:704.5px;top:384px;font-size:11.2px;line-height:14.0px;color:#1a1a1a;">06-02-2014</span>
<span class="d" style="left:776.5px;top:384px;font-size:11.2px;line-height:14.0px;color:#1a1a1a;">06-02-2014</span>
<span class="d" style="left:848.5px;top:384px;font-size:11.4px;line-height:14.25px;color:#1a1a1a;">12/2/2014</span>
<span class="d" style="left:921.5px;top:384px;font-size:11.2px;line-height:14.0px;color:#1a1a1a;">ABC sp.z.o.o.</span>
<span class="d" style="right:190.5px;top:385px;font-size:10.9px;line-height:13.62px;color:#1a1a1a;">73,31</span>
<span class="d" style="right:120.5px;top:385px;font-size:10.9px;line-height:13.62px;color:#1a1a1a;">16,86</span>
<span class="d" style="right:31.5px;top:385px;font-size:10.9px;line-height:13.62px;color:#1a1a1a;">90,17</span>
<div style="left:277px;top:402px;width:955px;height:23px;background:#f3f3f3;"></div>
<span class="d" style="left:-189.5px;width:1000px;text-align:center;top:407px;font-size:11.6px;line-height:14.5px;color:#1a1a1a;">O</span>
<span class="d" style="left:-108px;width:1000px;text-align:center;top:407px;font-size:11.6px;line-height:14.5px;color:#1a1a1a;">ZZ</span>
<span class="d" style="left:21px;width:1000px;text-align:center;top:407px;font-size:11.6px;line-height:14.5px;color:#1a1a1a;">NKST Nabycie krajowe środka trwałego</span>
<span class="d" style="left:632.4px;top:407px;font-size:11.6px;line-height:14.5px;color:#1a1a1a;">luty 2014</span>
<span class="d" style="left:704.5px;top:407px;font-size:11.2px;line-height:14.0px;color:#1a1a1a;">06-02-2014</span>
<span class="d" style="left:776.5px;top:407px;font-size:11.2px;line-height:14.0px;color:#1a1a1a;">06-02-2014</span>
<span class="d" style="left:848.5px;top:407px;font-size:11.4px;line-height:14.25px;color:#1a1a1a;">12/2/2014</span>
<span class="d" style="left:921.5px;top:407px;font-size:11.2px;line-height:14.0px;color:#1a1a1a;">ABC sp.z.o.o.</span>
<span class="d" style="right:190.5px;top:408px;font-size:10.9px;line-height:13.62px;color:#1a1a1a;">94,85</span>
<span class="d" style="right:120.5px;top:408px;font-size:10.9px;line-height:13.62px;color:#1a1a1a;">21,82</span>
<span class="d" style="right:31.5px;top:408px;font-size:10.9px;line-height:13.62px;color:#1a1a1a;">116,67</span>
<div style="left:277px;top:425px;width:955px;height:23px;background:#ffffff;"></div>
<span class="d" style="left:-189.5px;width:1000px;text-align:center;top:430px;font-size:11.6px;line-height:14.5px;color:#1a1a1a;">O</span>
<span class="d" style="left:-108px;width:1000px;text-align:center;top:430px;font-size:11.6px;line-height:14.5px;color:#1a1a1a;">ZZ</span>
<span class="d" style="left:21px;width:1000px;text-align:center;top:430px;font-size:11.6px;line-height:14.5px;color:#1a1a1a;">NKST Nabycie krajowe środka trwałego</span>
<span class="d" style="left:632.4px;top:430px;font-size:11.6px;line-height:14.5px;color:#1a1a1a;">luty 2014</span>
<span class="d" style="left:704.5px;top:430px;font-size:11.2px;line-height:14.0px;color:#1a1a1a;">06-02-2014</span>
<span class="d" style="left:776.5px;top:430px;font-size:11.2px;line-height:14.0px;color:#1a1a1a;">06-02-2014</span>
<span class="d" style="left:848.5px;top:430px;font-size:11.4px;line-height:14.25px;color:#1a1a1a;">12/2/2014</span>
<span class="d" style="left:921.5px;top:430px;font-size:11.2px;line-height:14.0px;color:#1a1a1a;">ABC sp.z.o.o.</span>
<span class="d" style="right:190.5px;top:431px;font-size:10.9px;line-height:13.62px;color:#1a1a1a;">308,27</span>
<span class="d" style="right:120.5px;top:431px;font-size:10.9px;line-height:13.62px;color:#1a1a1a;">70,90</span>
<span class="d" style="right:31.5px;top:431px;font-size:10.9px;line-height:13.62px;color:#1a1a1a;">379,17</span>
<div style="left:277px;top:448px;width:955px;height:23px;background:#f3f3f3;"></div>
<span class="d" style="left:-189.5px;width:1000px;text-align:center;top:453px;font-size:11.6px;line-height:14.5px;color:#1a1a1a;">O</span>
<span class="d" style="left:-108px;width:1000px;text-align:center;top:453px;font-size:11.6px;line-height:14.5px;color:#1a1a1a;">ZZ</span>
<span class="d" style="left:21px;width:1000px;text-align:center;top:453px;font-size:11.6px;line-height:14.5px;color:#1a1a1a;">NKST Nabycie krajowe środka trwałego</span>
<span class="d" style="left:632.4px;top:453px;font-size:11.6px;line-height:14.5px;color:#1a1a1a;">luty 2014</span>
<span class="d" style="left:704.5px;top:453px;font-size:11.2px;line-height:14.0px;color:#1a1a1a;">06-02-2014</span>
<span class="d" style="left:776.5px;top:453px;font-size:11.2px;line-height:14.0px;color:#1a1a1a;">06-02-2014</span>
<span class="d" style="left:848.5px;top:453px;font-size:11.4px;line-height:14.25px;color:#1a1a1a;">12/2/2014</span>
<span class="d" style="left:921.5px;top:453px;font-size:11.2px;line-height:14.0px;color:#1a1a1a;">ABC sp.z.o.o.</span>
<span class="d" style="right:190.5px;top:454px;font-size:10.9px;line-height:13.62px;color:#1a1a1a;">366,53</span>
<span class="d" style="right:120.5px;top:454px;font-size:10.9px;line-height:13.62px;color:#1a1a1a;">84,30</span>
<span class="d" style="right:31.5px;top:454px;font-size:10.9px;line-height:13.62px;color:#1a1a1a;">450,83</span>
<div style="left:330px;top:477px;width:1px;height:17px;background:repeating-linear-gradient(to bottom,#c8c8c8 0 1px,transparent 1px 3px)"></div>
<div style="left:368px;top:477px;width:1px;height:17px;background:repeating-linear-gradient(to bottom,#c8c8c8 0 1px,transparent 1px 3px)"></div>
<div style="left:413px;top:477px;width:1px;height:17px;background:repeating-linear-gradient(to bottom,#c8c8c8 0 1px,transparent 1px 3px)"></div>
<div style="left:700px;top:477px;width:1px;height:17px;background:repeating-linear-gradient(to bottom,#c8c8c8 0 1px,transparent 1px 3px)"></div>
<div style="left:772px;top:477px;width:1px;height:17px;background:repeating-linear-gradient(to bottom,#c8c8c8 0 1px,transparent 1px 3px)"></div>
<div style="left:845px;top:477px;width:1px;height:17px;background:repeating-linear-gradient(to bottom,#c8c8c8 0 1px,transparent 1px 3px)"></div>
<div style="left:916px;top:477px;width:1px;height:17px;background:repeating-linear-gradient(to bottom,#c8c8c8 0 1px,transparent 1px 3px)"></div>
<div style="left:997px;top:477px;width:1px;height:17px;background:repeating-linear-gradient(to bottom,#c8c8c8 0 1px,transparent 1px 3px)"></div>
<div style="left:1067px;top:477px;width:1px;height:17px;background:repeating-linear-gradient(to bottom,#c8c8c8 0 1px,transparent 1px 3px)"></div>
<div style="left:1137px;top:477px;width:1px;height:17px;background:repeating-linear-gradient(to bottom,#c8c8c8 0 1px,transparent 1px 3px)"></div>
<div style="left:1226px;top:477px;width:1px;height:17px;background:repeating-linear-gradient(to bottom,#c8c8c8 0 1px,transparent 1px 3px)"></div>
<span class="d" style="right:191.5px;top:480px;font-size:10.9px;line-height:13.62px;color:#1a1a1a;">16 500,00</span>
<span class="d" style="right:121.5px;top:480px;font-size:10.9px;line-height:13.62px;color:#1a1a1a;">3 315,00</span>
<span class="d" style="right:32.4px;top:480px;font-size:10.9px;line-height:13.62px;color:#1a1a1a;">19 815,00</span>
<div style="left:277px;top:494px;width:967px;height:1px;background:#d4d4d4;"></div>
<div style="left:277px;top:495px;width:967px;height:8px;background:#e6e6e6;"></div>
<div style="left:277px;top:503px;width:967px;height:1px;background:#d0d0d0;"></div>
<div style="left:1232px;top:188px;width:12px;height:159px;background:#808080;"></div>
<svg style="left:1233px;top:175px" width="10" height="8"><path d="M1 6.5 L5 2.5 L9 6.5" stroke="#6a6a6a" stroke-width="1.5" fill="none"/></svg>
<svg style="left:1233px;top:483px" width="10" height="8"><path d="M1 1.5 L5 5.5 L9 1.5" stroke="#6a6a6a" stroke-width="1.5" fill="none"/></svg>
<div style="left:277px;top:504px;width:967px;height:25px;background:#efefef;"></div>
<div style="left:539px;top:505px;width:104px;height:24px;background:#ffffff;"></div>
<div style="left:277px;top:529px;width:967px;height:1px;background:#d2d2d2;"></div>
<span style="left:291px;top:509px;font-size:11.4px;line-height:14.25px;color:#7b7b7b;letter-spacing:-0.1px">WIZYTÓWKA</span>
<span style="left:383px;top:509px;font-size:11.4px;line-height:14.25px;color:#7b7b7b;letter-spacing:-0.1px">ZDARZENIE</span>
<span style="left:465px;top:509px;font-size:11.4px;line-height:14.25px;color:#7b7b7b;letter-spacing:-0.1px">SZCZEGÓŁY</span>
<span style="left:549px;top:509px;font-size:11.4px;line-height:14.25px;color:#7b7b7b;letter-spacing:-0.5px">ROZRACHUNEK</span>
<span style="left:653.4px;top:509px;font-size:11.4px;line-height:14.25px;color:#7b7b7b;letter-spacing:-0.3px">POLA WŁASNE</span>
<span class="d" style="left:293.3px;top:540px;font-size:11.4px;line-height:14.25px;color:#1a1a1a;">Rozrachunek:</span>
<div style="left:399px;top:536px;width:268px;height:21px;background:#f7f7f7;"></div>
<span class="d" style="left:401px;top:540px;font-size:11.4px;line-height:14.25px;color:#1a1a1a;">Zobowiązanie</span>
<div style="left:654px;top:543px;width:7px;height:1.2px;background:#1a1a1a;"></div>
<div style="left:654px;top:546px;width:7px;height:1.2px;background:#1a1a1a;"></div>
<div style="left:654px;top:549px;width:7px;height:1.2px;background:#1a1a1a;"></div>
<span class="d" style="left:293.3px;top:564px;font-size:11.4px;line-height:14.25px;color:#1a1a1a;">Status powiązania:</span>
<div style="left:399px;top:560px;width:268px;height:21px;background:#f7f7f7;"></div>
<span class="d" style="left:401px;top:564px;font-size:11.4px;line-height:14.25px;color:#1a1a1a;">Utworzony</span>
<span class="d" style="left:948px;top:540px;font-size:11.4px;line-height:14.25px;color:#1a1a1a;">Kwota:</span>
<div style="left:1047px;top:536px;width:168px;height:21px;background:#f7f7f7;"></div>
<span class="d" style="right:61.7px;top:540px;font-size:11.4px;line-height:14.25px;color:#1a1a1a;">14 760,00 PLN</span>
<div style="left:1202px;top:543px;width:7px;height:1.2px;background:#1a1a1a;"></div>
<div style="left:1202px;top:546px;width:7px;height:1.2px;background:#1a1a1a;"></div>
<div style="left:1202px;top:549px;width:7px;height:1.2px;background:#1a1a1a;"></div>
<span class="d" style="left:948px;top:564px;font-size:11.4px;line-height:14.25px;color:#1a1a1a;">Termin płatności:</span>
<div style="left:1047px;top:560px;width:168px;height:21px;background:#f7f7f7;"></div>
<span class="d" style="left:1049px;top:565px;font-size:10.83px;line-height:13.54px;color:#1a1a1a;">20-02-2014</span>
<span style="left:293px;top:601px;font-size:12.4px;line-height:15.5px;color:#8e8e8e;">Rozliczenia</span>
<span class="d" style="left:-167.5px;width:1000px;text-align:center;top:620px;font-size:11.4px;line-height:14.25px;color:#1a1a1a;">R</span>
<span class="d" style="left:8px;width:1000px;text-align:center;top:620px;font-size:11.4px;line-height:14.25px;color:#1a1a1a;">Dokument</span>
<span class="d" style="left:214.5px;width:1000px;text-align:center;top:620px;font-size:11.4px;line-height:14.25px;color:#1a1a1a;">Termin płatności</span>
<span class="d" style="left:350.5px;width:1000px;text-align:center;top:620px;font-size:11.4px;line-height:14.25px;color:#1a1a1a;">Kwota</span>
<span class="d" style="left:485.5px;width:1000px;text-align:center;top:620px;font-size:11.4px;line-height:14.25px;color:#1a1a1a;">Pozostało</span>
<span class="d" style="left:635.5px;width:1000px;text-align:center;top:620px;font-size:11.4px;line-height:14.25px;color:#1a1a1a;">Kwota rozliczenia</span>
<div style="left:295px;top:636px;width:921px;height:2px;background:#a8a8a8;"></div>
<div style="left:296px;top:639px;width:73px;height:21px;background:#f7f7f7;"></div>
<div style="left:371px;top:639px;width:275px;height:21px;background:#f7f7f7;"></div>
<div style="left:648px;top:639px;width:134px;height:21px;background:#f7f7f7;"></div>
<div style="left:784px;top:639px;width:133px;height:21px;background:#f7f7f7;"></div>
<div style="left:919px;top:639px;width:134px;height:21px;background:#f7f7f7;"></div>
<div style="left:1055px;top:639px;width:161px;height:21px;background:#f7f7f7;"></div>
<svg style="left:325px;top:643px" width="14" height="14"><rect x="0.5" y="0.5" width="13" height="12" fill="#fff" stroke="#999"/><path d="M2.4 7 L5.3 10.6 L11.6 2.6" stroke="#0a70c0" stroke-width="1.9" fill="none"/></svg>
<span class="d" style="left:376.3px;top:643px;font-size:11.4px;line-height:14.25px;color:#1a1a1a;">Dyspozycja bankowa</span>
<span class="d" style="right:342.5px;top:643px;font-size:11.4px;line-height:14.25px;color:#1a1a1a;">455,00 PLN</span>
<span class="d" style="right:206.4px;top:643px;font-size:11.4px;line-height:14.25px;color:#1a1a1a;">0,00 PLN</span>
<span class="d" style="right:44.4px;top:643px;font-size:11.4px;line-height:14.25px;color:#1a1a1a;">455,00 PLN</span>
<div style="left:296px;top:662px;width:73px;height:21px;background:#f7f7f7;"></div>
<div style="left:371px;top:662px;width:275px;height:21px;background:#f7f7f7;"></div>
<div style="left:648px;top:662px;width:134px;height:21px;background:#f7f7f7;"></div>
<div style="left:784px;top:662px;width:133px;height:21px;background:#f7f7f7;"></div>
<div style="left:919px;top:662px;width:134px;height:21px;background:#f7f7f7;"></div>
<div style="left:1055px;top:662px;width:161px;height:21px;background:#f7f7f7;"></div>
<svg style="left:325px;top:666px" width="14" height="14"><rect x="0.5" y="0.5" width="13" height="12" fill="#fff" stroke="#999"/><path d="M2.4 7 L5.3 10.6 L11.6 2.6" stroke="#0a70c0" stroke-width="1.9" fill="none"/></svg>
<span class="d" style="left:376.3px;top:666px;font-size:11.4px;line-height:14.25px;color:#1a1a1a;">KW 2/KAS/2014</span>
<span class="d" style="right:342.5px;top:666px;font-size:11.4px;line-height:14.25px;color:#1a1a1a;">260,00 PLN</span>
<span class="d" style="right:206.4px;top:666px;font-size:11.4px;line-height:14.25px;color:#1a1a1a;">0,00 PLN</span>
<span class="d" style="right:44.4px;top:666px;font-size:11.4px;line-height:14.25px;color:#1a1a1a;">140,00 PLN</span>
<div style="left:296px;top:685px;width:73px;height:21px;background:#f7f7f7;"></div>
<div style="left:371px;top:685px;width:275px;height:21px;background:#f7f7f7;"></div>
<div style="left:648px;top:685px;width:134px;height:21px;background:#f7f7f7;"></div>
<div style="left:784px;top:685px;width:133px;height:21px;background:#f7f7f7;"></div>
<div style="left:919px;top:685px;width:134px;height:21px;background:#f7f7f7;"></div>
<div style="left:1055px;top:685px;width:161px;height:21px;background:#f7f7f7;"></div>
<svg style="left:325px;top:689px" width="14" height="14"><rect x="0.5" y="0.5" width="13" height="12" fill="#fff" stroke="#999"/><path d="M2.4 7 L5.3 10.6 L11.6 2.6" stroke="#0a70c0" stroke-width="1.9" fill="none"/></svg>
<span class="d" style="left:376.3px;top:689px;font-size:11.4px;line-height:14.25px;color:#1a1a1a;">KW 4/KAS/2014</span>
<span class="d" style="right:342.5px;top:689px;font-size:11.4px;line-height:14.25px;color:#1a1a1a;">541,00 PLN</span>
<span class="d" style="right:206.4px;top:689px;font-size:11.4px;line-height:14.25px;color:#1a1a1a;">0,00 PLN</span>
<span class="d" style="right:44.4px;top:689px;font-size:11.4px;line-height:14.25px;color:#1a1a1a;">541,00 PLN</span>
<span class="d" style="left:1011.4px;top:717px;font-size:11.4px;line-height:14.25px;color:#1a1a1a;">Rozliczono:</span>
<div style="left:1102px;top:713px;width:108px;height:20px;background:#f7f7f7;"></div>
<span class="d" style="right:46.2px;top:717px;font-size:11.4px;line-height:14.25px;color:#1a1a1a;">1 136,00 PLN</span>
<span class="d" style="left:1011.4px;top:741px;font-size:11.4px;line-height:14.25px;color:#1a1a1a;">Do rozliczenia:</span>
<div style="left:1102px;top:737px;width:108px;height:20px;background:#f7f7f7;"></div>
<span class="d" style="right:46.2px;top:741px;font-size:11.4px;line-height:14.25px;color:#1a1a1a;">13 624,00 PLN</span>
<div style="left:1232px;top:547px;width:12px;height:198px;background:#808080;"></div>
<svg style="left:1233px;top:534px" width="10" height="8"><path d="M1 6.5 L5 2.5 L9 6.5" stroke="#6a6a6a" stroke-width="1.5" fill="none"/></svg>
<span style="left:1233.5px;top:750px;font-size:11px;line-height:13.75px;color:#222;letter-spacing:1px">+/-</span>
</body></html>
